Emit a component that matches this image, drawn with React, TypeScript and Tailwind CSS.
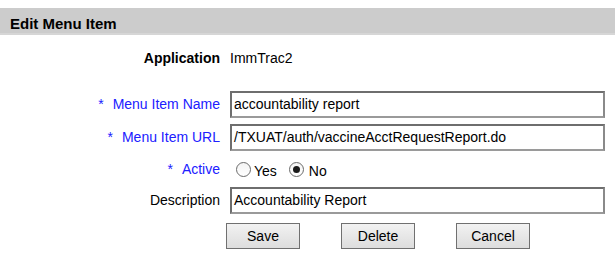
import React from "react";

const font = { fontFamily: '"Liberation Sans", Arial, sans-serif' };

function Label({ children, req }: { children: React.ReactNode; req?: boolean }) {
  return (
    <div className={`w-[220px] shrink-0 text-right text-[14px] ${req ? "text-[#2020ff]" : "text-black"}`}>
      {req && <span className="mr-[9px]">*</span>}
      {children}
    </div>
  );
}

function Input({ value }: { value: string }) {
  return (
    <div className="ml-[10px] flex h-[27px] w-[375px] items-center border-2 border-t-[#6e6e6e] border-l-[#6e6e6e] border-r-[#8a8a8a] border-b-[#9a9a9a] bg-white px-[2px] text-[14px] text-black">
      {value}
    </div>
  );
}

function Radio({ checked }: { checked?: boolean }) {
  return (
    <span className="inline-flex h-[15px] w-[15px] shrink-0 items-center justify-center rounded-full border border-[#6b6b6b] bg-gradient-to-b from-[#f4f4f4] to-white">
      {checked && <span className="h-[7px] w-[7px] rounded-full bg-[#1a1a1a]" />}
    </span>
  );
}

function Btn({ children }: { children: React.ReactNode }) {
  return (
    <button className="flex h-[26px] w-[74px] items-center justify-center border border-[#707070] bg-gradient-to-b from-[#f2f2f2] to-[#dddddd] text-[14px] text-black">
      {children}
    </button>
  );
}

export default function App() {
  return (
    <div className="h-[267px] w-[615px] bg-white" style={font}>
      <div className="h-[8px]" />
      <div className="flex h-[27px] items-center border-b-2 border-[#d6d6d6] bg-[#cccccc] pl-[10px] pt-[7px] text-[15px] font-bold text-black">
        Edit Menu Item
      </div>
      <div className="mt-[12px] flex h-[22px] items-center">
        <Label>
          <span className="font-bold">Application</span>
        </Label>
        <span className="ml-[10px] text-[14px] text-black">ImmTrac2</span>
      </div>
      <div className="mt-[22px] flex flex-col gap-[6px]">
        <div className="flex items-center">
          <Label req>Menu Item Name</Label>
          <Input value="accountability report" />
        </div>
        <div className="flex items-center">
          <Label req>Menu Item URL</Label>
          <Input value="/TXUAT/auth/vaccineAcctRequestReport.do" />
        </div>
        <div className="flex h-[24px] items-center">
          <Label req>Active</Label>
          <div className="ml-[16px] flex items-center text-[14px] text-black">
            <Radio />
            <span className="ml-[3px] mt-[4px]">Yes</span>
            <span className="ml-[12px] flex">
              <Radio checked />
            </span>
            <span className="ml-[5px] mt-[4px]">No</span>
          </div>
        </div>
        <div className="flex items-center">
          <Label>Description</Label>
          <Input value="Accountability Report" />
        </div>
      </div>
      <div className="mt-[9px] flex gap-[41px] pl-[226px]">
        <Btn>Save</Btn>
        <Btn>Delete</Btn>
        <Btn>Cancel</Btn>
      </div>
    </div>
  );
}
